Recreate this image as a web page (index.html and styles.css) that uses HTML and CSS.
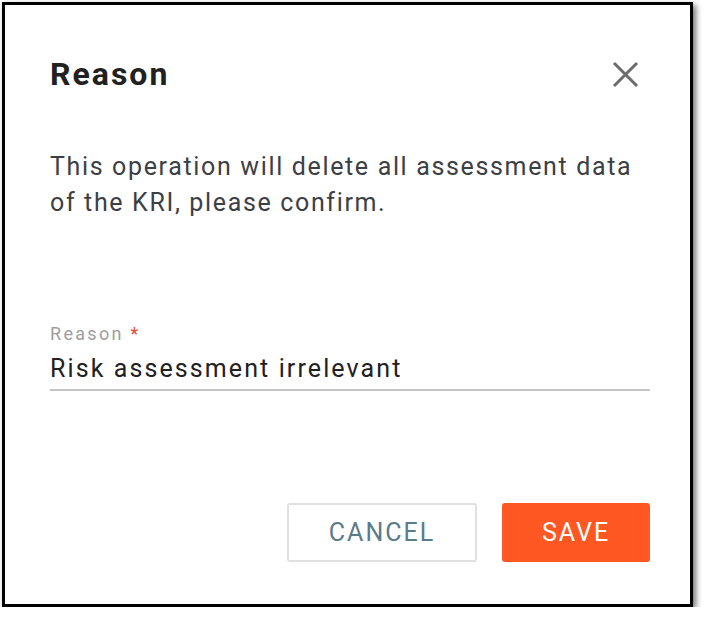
FILE: index.html
```html
<!DOCTYPE html>
<html>
<head>
<meta charset="utf-8">
<link rel="stylesheet" href="styles.css">
</head>
<body>
<div class="dialog">
  <div class="header">
    <h1 class="title">Reason</h1>
    <button class="close" aria-label="Close">
      <svg width="27" height="27" viewBox="0 0 27 27"><path d="M2 2 L25 25 M25 2 L2 25" stroke="#6b6b6b" stroke-width="3" fill="none"/></svg>
    </button>
  </div>
  <p class="message">This operation will delete all assessment data of the KRI, please confirm.</p>
  <div class="field">
    <label class="label">Reason <span class="req">*</span></label>
    <div class="input">Risk assessment irrelevant</div>
  </div>
  <div class="actions">
    <button class="btn btn-cancel">CANCEL</button>
    <button class="btn btn-save">SAVE</button>
  </div>
</div>
</body>
</html>
```
FILE: styles.css
```css
html, body {
  margin: 0;
  padding: 0;
  background: #ffffff;
}
body {
  font-family: Roboto, "Liberation Sans", sans-serif;
}
.dialog {
  box-sizing: border-box;
  margin: 2px 0 0 2px;
  width: 691px;
  height: 605px;
  border: 3px solid #000;
  box-shadow: 3px 3px 6px rgba(0,0,0,0.55);
  background: #fff;
  padding: 0 40px 0 45px;
  display: flex;
  flex-direction: column;
}
.header {
  display: flex;
  align-items: center;
  justify-content: space-between;
  height: 68px;
  margin-top: 35px;
}
.title {
  margin: 0;
  font-size: 32px;
  font-weight: 700;
  color: #212121;
  letter-spacing: 2px;
}
.close {
  border: 0;
  background: transparent;
  padding: 0;
  margin-right: 11px;
  width: 27px;
  height: 27px;
  display: flex;
}
.message {
  margin: 41px 0 0 0;
  font-size: 25px;
  line-height: 36px;
  color: #3c4043;
  letter-spacing: 1.65px;
}
.field {
  margin-top: 102px;
  display: flex;
  flex-direction: column;
}
.label {
  font-size: 18px;
  color: #9e9e9e;
  line-height: 22px;
  letter-spacing: 2.3px;
}
.req {
  color: #f44336;
}
.input {
  font-size: 25px;
  color: #212121;
  line-height: 30px;
  padding: 9px 0 5px 0;
  border-bottom: 2px solid #c4c4c4;
  letter-spacing: 2.1px;
}
.actions {
  margin-top: auto;
  margin-bottom: 42px;
  display: flex;
  justify-content: flex-end;
  gap: 25px;
}
.btn {
  height: 59px;
  border-radius: 3px;
  font-family: Roboto, "Liberation Sans", sans-serif;
  font-size: 25px;
  font-weight: 400;
  letter-spacing: 2px;
  cursor: pointer;
}
.btn-cancel {
  width: 190px;
  background: #fff;
  border: 2px solid #e0e0e0;
  color: #5c7b88;
}
.btn-save {
  width: 148px;
  background: #ff5722;
  border: 0;
  color: #fff;
}
```
